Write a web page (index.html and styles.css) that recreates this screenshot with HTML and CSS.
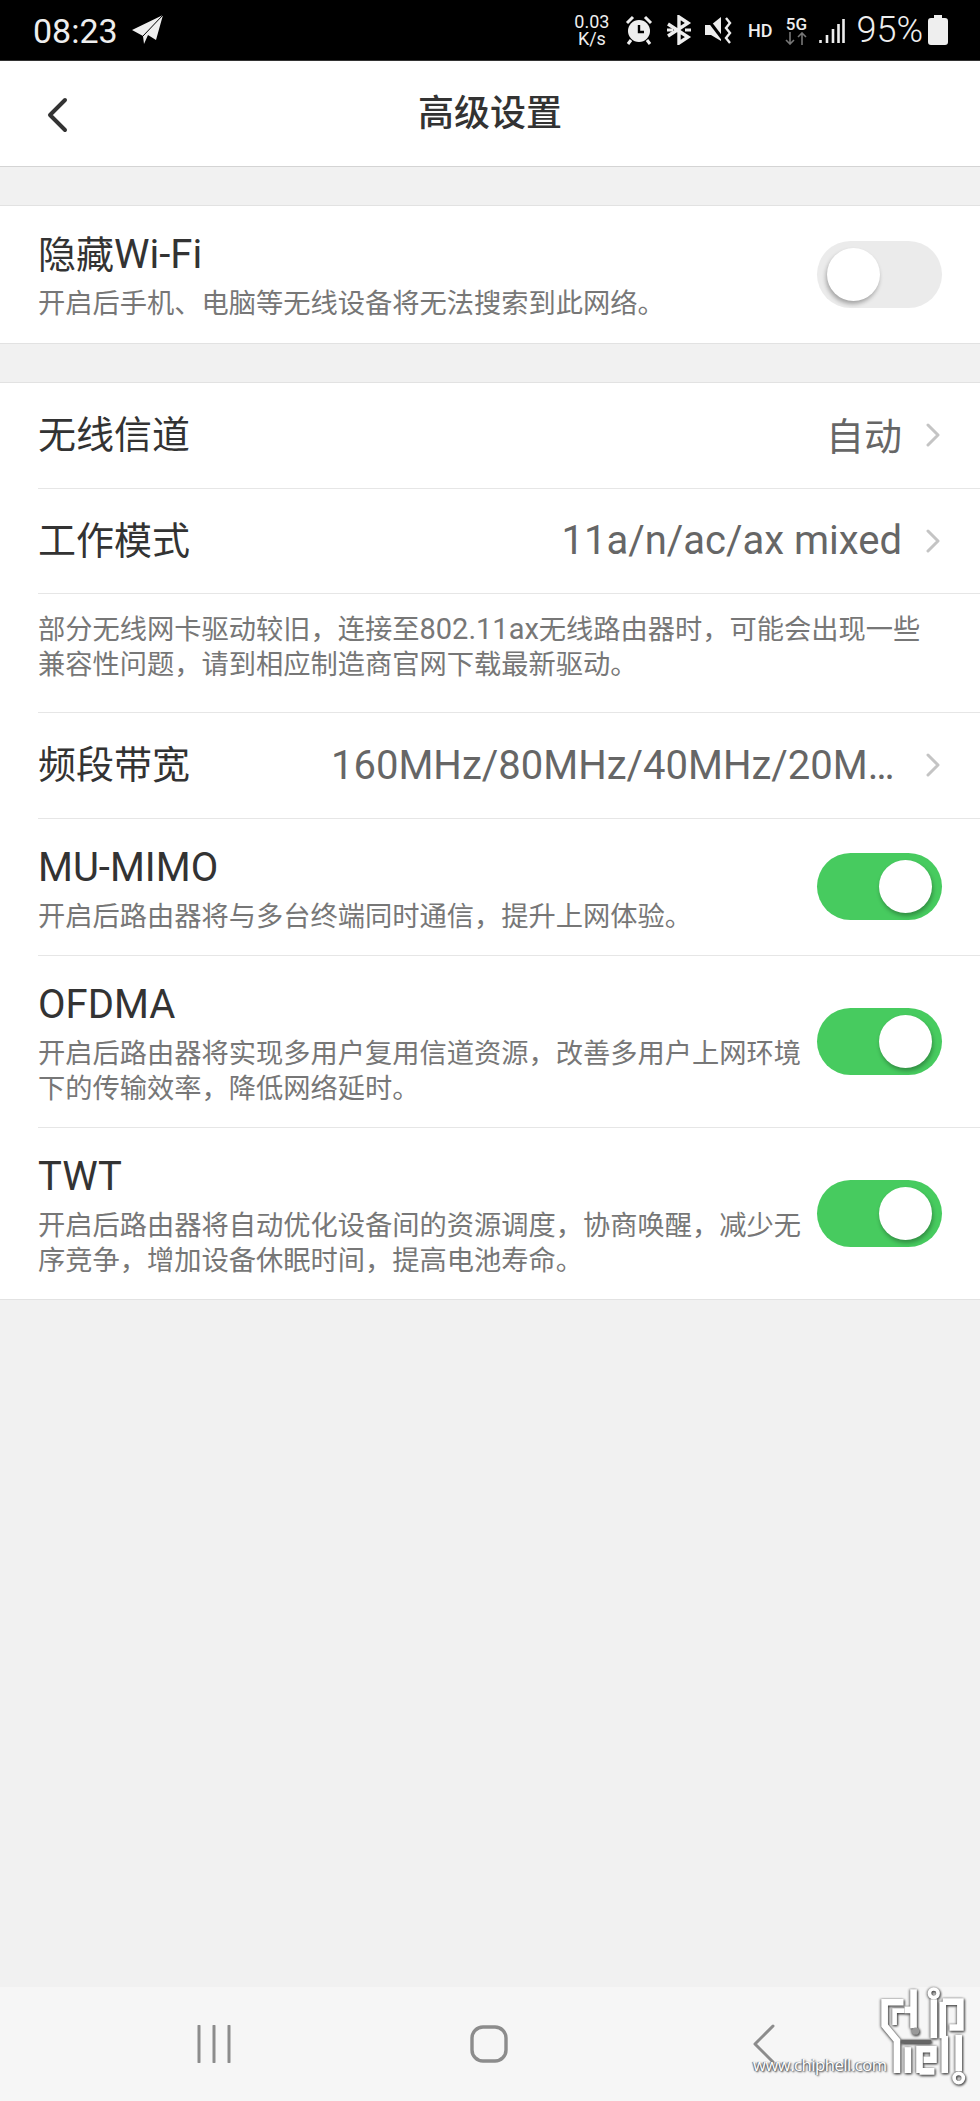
FILE: index.html
```html
<!DOCTYPE html>
<html lang="zh-CN">

<head>
    <meta charset="UTF-8">
    <meta name="viewport" content="width=device-width, initial-scale=1.0">
    <title>高级设置</title>
    <link rel="stylesheet" href="styles.css">
</head>

<body>
    <div class="screen">
        <div class="status-bar">
            <span class="clock">08:23</span>
            <svg class="icon-plane" width="32" height="32" viewBox="0 0 32 32">
                <path d="M0 16 L31 1 L24 26 L16 21 L12 30 L11 22 Z" fill="#eee" />
                <path d="M11 22 L31 1" stroke="#000" stroke-width="1" />
            </svg>
            <div class="status-right">
                <span class="net-speed">0.03<br>K/s</span>
                <svg class="icon-alarm" width="28" height="30" viewBox="0 0 28 30">
                    <circle cx="14" cy="16" r="11" fill="#eee" />
                    <path d="M14 10 V17 H19" fill="none" stroke="#000" stroke-width="2.4" />
                    <path d="M2 8 L8 2 M26 8 L20 2 M6 25 L3 29 M22 25 L25 29" stroke="#eee" stroke-width="3" />
                </svg>
                <svg class="icon-bt" width="26" height="30" viewBox="0 0 26 30">
                    <path d="M2 9 L22 22 L13 28 V2 L22 8 L2 21" fill="none" stroke="#eee" stroke-width="3.4" />
                    <path d="M19 15 H25 M1 15 H7" stroke="#eee" stroke-width="3" />
                </svg>
                <svg class="icon-mute" width="28" height="30" viewBox="0 0 28 30">
                    <path d="M1 10 H7 L17 2 V26 L7 20 H1 Z" fill="#eee" />
                    <path d="M2 2 L21 27" stroke="#000" stroke-width="3" />
                    <path d="M22 3 L26 8 L22 13 L26 18 L22 23 L26 28" fill="none" stroke="#eee" stroke-width="2.4" />
                </svg>
                <span class="hd">HD</span>
                <span class="net-type">5G<svg width="22" height="13" viewBox="0 0 22 13">
                        <path d="M5 0 V12 M1 8 L5 12 L9 8" fill="none" stroke="#777" stroke-width="1.6" />
                        <path d="M17 13 V1 M13 5 L17 1 L21 5" fill="none" stroke="#777" stroke-width="1.6" />
                    </svg></span>
                <svg class="icon-signal" width="26" height="26" viewBox="0 0 26 26">
                    <path d="M1.500 22 V25 M8 17 V25 M14 11 V25 M19.500 6 V25 M24.500 1 V25" stroke="#eee" stroke-width="2.600" />
                </svg>
                <span class="battery-text">95%</span>
                <svg class="icon-battery" width="20" height="30" viewBox="0 0 20 30">
                    <path d="M6 0 H14 V3 H17 Q20 3 20 6 V27 Q20 30 17 30 H3 Q0 30 0 27 V6 Q0 3 3 3 H6 Z" fill="#eee" />
                </svg>
            </div>
        </div>

        <div class="title-bar">
            <svg class="back" width="22" height="36" viewBox="0 0 22 36">
                <path d="M19 3 L4 18 L19 33" fill="none" stroke="#333" stroke-width="4" stroke-linecap="round" stroke-linejoin="round" />
            </svg>
            <h1>高级设置</h1>
        </div>

        <div class="section first">
            <div class="row row-text">
                <div class="row-info">
                    <div class="row-title">隐藏<span class="latin">Wi-Fi</span></div>
                    <div class="row-desc">开启后手机、电脑等无线设备将无法搜索到此网络。</div>
                </div>
                <div class="switch"><span class="knob"></span></div>
            </div>
        </div>

        <div class="section">
            <div class="row row-link">
                <div class="row-title">无线信道</div>
                <div class="row-value cjk">自动</div>
                <svg class="chevron" width="14" height="24" viewBox="0 0 14 24">
                    <path d="M2 2 L12 12 L2 22" fill="none" stroke="#c4c4c4" stroke-width="3" stroke-linecap="round" stroke-linejoin="round" />
                </svg>
            </div>
            <div class="row row-link">
                <div class="row-title">工作模式</div>
                <div class="row-value">11a/n/ac/ax mixed</div>
                <svg class="chevron" width="14" height="24" viewBox="0 0 14 24">
                    <path d="M2 2 L12 12 L2 22" fill="none" stroke="#c4c4c4" stroke-width="3" stroke-linecap="round" stroke-linejoin="round" />
                </svg>
            </div>
            <div class="row row-note">部分无线网卡驱动较旧，连接至<span class="latin">802.11ax</span>无线路由器时，可能会出现一些<br>兼容性问题，请到相应制造商官网下载最新驱动。</div>
            <div class="row row-link">
                <div class="row-title">频段带宽</div>
                <div class="row-value">160MHz/80MHz/40MHz/20MHz</div>
                <svg class="chevron" width="14" height="24" viewBox="0 0 14 24">
                    <path d="M2 2 L12 12 L2 22" fill="none" stroke="#c4c4c4" stroke-width="3" stroke-linecap="round" stroke-linejoin="round" />
                </svg>
            </div>
            <div class="row row-text">
                <div class="row-info">
                    <div class="row-title latin">MU-MIMO</div>
                    <div class="row-desc">开启后路由器将与多台终端同时通信，提升上网体验。</div>
                </div>
                <div class="switch on"><span class="knob"></span></div>
            </div>
            <div class="row row-text">
                <div class="row-info">
                    <div class="row-title latin">OFDMA</div>
                    <div class="row-desc">开启后路由器将实现多用户复用信道资源，改善多用户上网环境下的传输效率，降低网络延时。</div>
                </div>
                <div class="switch on"><span class="knob"></span></div>
            </div>
            <div class="row row-text last">
                <div class="row-info">
                    <div class="row-title latin">TWT</div>
                    <div class="row-desc">开启后路由器将自动优化设备间的资源调度，协商唤醒，减少无序竞争，增加设备休眠时间，提高电池寿命。</div>
                </div>
                <div class="switch on"><span class="knob"></span></div>
            </div>
        </div>

        <div class="nav-bar">
            <svg width="34" height="38" viewBox="0 0 34 38">
                <path d="M2 1 V37 M17 1 V37 M32 1 V37" stroke="#8c8c8c" stroke-width="3" stroke-linecap="round" />
            </svg>
            <svg width="38" height="38" viewBox="0 0 38 38">
                <rect x="2" y="2" width="34" height="34" rx="11" fill="none" stroke="#8c8c8c" stroke-width="3.400" />
            </svg>
            <svg width="24" height="40" viewBox="0 0 24 40">
                <path d="M21 2 L3 20 L21 38" fill="none" stroke="#8c8c8c" stroke-width="3" stroke-linecap="round" stroke-linejoin="round" />
            </svg>
        </div>

        <!-- watermark sits over the nav bar -->
        <div class="watermark">
            <span class="watermark-url">www.chiphell.com</span>
            <svg class="watermark-logo" width="93" height="103" viewBox="295 75 280 310">
                <g fill="none" stroke="#fff" stroke-width="20">
                    <path d="M372 127 H315 V197 L352 242 V340" />
                    <path d="M345 195 V152 H375" stroke-width="14" />
                    <path d="M402 88 V205 M375 150 H402" />
                    <path d="M463 118 V235" />
                    <circle cx="463" cy="100" r="13" stroke-width="11" />
                    <path d="M490 125 H543 V203 H510 M490 125 V235" />
                    <path d="M385 262 V340" />
                    <path d="M420 340 V268 H462 V300 H432 M420 335 H465" />
                    <path d="M496 228 V340" />
                    <path d="M538 225 V335" />
                    <circle cx="538" cy="355" r="14" stroke-width="11" />
                </g>
                <path d="M365 245 H455" fill="none" stroke="#666" stroke-width="10" />
                <circle cx="408" cy="214" r="11" fill="#999" />
            </svg>
        </div>
    </div>
</body>

</html>
```

FILE: styles.css
```css
body {
    margin: 0;
    font-family: Roboto, "Noto Sans CJK SC", sans-serif;
    background-color: #f1f1f1;
}

.screen {
    position: relative;
    width: 980px;
    height: 2101px;
    display: flex;
    flex-direction: column;
    overflow: hidden;
}

/* status bar */
.status-bar {
    height: 60px;
    background: #000;
    color: #eee;
    display: flex;
    align-items: center;
    padding: 0 32px 0 33px;
    flex-shrink: 0;
}

.clock {
    font-size: 34px;
    margin-top: 1px;
}

.icon-plane {
    margin-left: 14px;
}

.status-right {
    margin-left: auto;
    display: flex;
    align-items: center;
}

.net-speed {
    font-size: 18px;
    line-height: 17px;
    text-align: center;
    width: 38px;
    margin-right: 14px;
}

.icon-bt {
    margin-left: 13px;
}

.icon-mute {
    margin-left: 12px;
}

.hd {
    font-size: 18px;
    font-weight: 500;
    margin-left: 16px;
}

.net-type {
    font-size: 17px;
    font-weight: 500;
    line-height: 16px;
    margin-left: 13px;
    display: flex;
    flex-direction: column;
    align-items: center;
}

.icon-signal {
    margin-left: 12px;
    margin-top: 2px;
}

.battery-text {
    font-size: 36px;
    font-weight: 300;
    margin-left: 11px;
}

.icon-battery {
    margin-left: 5px;
}

/* title bar */
.title-bar {
    height: 105px;
    background: #fff;
    border-top: 1px solid #333;
    border-bottom: 1px solid #d4d4d4;
    display: flex;
    align-items: center;
    justify-content: center;
    position: relative;
    flex-shrink: 0;
}

.back {
    position: absolute;
    left: 46px;
    top: 36px;
}

h1 {
    margin: -8px 0 0;
    font-size: 36px;
    font-weight: 500;
    color: #333;
}

/* settings lists */
.section {
    background: #fff;
    border-top: 1px solid #e2e2e2;
    border-bottom: 1px solid #e2e2e2;
    padding-left: 38px;
    margin-top: 38px;
}

.row {
    display: flex;
    align-items: center;
    padding-right: 38px;
    border-bottom: 1px solid #e6e6e6;
    box-sizing: border-box;
}

.row.last,
.section.first .row {
    border-bottom: none;
}

.row-link {
    height: 105.500px;
}

.row-title {
    font-size: 38px;
    line-height: 50px;
    color: #333;
    white-space: nowrap;
}

.row-title.latin,
.row-title .latin {
    font-size: 40px;
}

.row-value {
    margin-left: auto;
    max-width: 571px;
    font-size: 40px;
    color: #666;
    white-space: nowrap;
    overflow: hidden;
    text-overflow: ellipsis;
}

.row-value.cjk {
    font-size: 38px;
    margin-top: -4px;
}

.chevron {
    margin-left: 24px;
    margin-right: 2px;
    flex-shrink: 0;
}

.row-note {
    display: block;
    padding-top: 18px;
    padding-bottom: 29px;
    font-size: 27.250px;
    line-height: 35px;
    color: #777;
}

.row-note .latin {
    font-size: 29px;
}

.row-text {
    padding-top: 24px;
    padding-bottom: 20px;
}

.section.first .row-text {
    padding-bottom: 21px;
}

.row-info {
    flex: 1;
    min-width: 0;
}

.row-desc {
    margin-top: 7px;
    width: 770px;
    font-size: 27.250px;
    line-height: 35px;
    color: #777;
}

/* toggle */
.switch {
    position: relative;
    width: 125px;
    height: 67px;
    border-radius: 34px;
    background: #ebebeb;
    margin-left: auto;
    margin-top: -4px;
    flex-shrink: 0;
}

.switch.on {
    background: #47cb5f;
}

.knob {
    position: absolute;
    left: 10px;
    top: 7px;
    width: 53px;
    height: 53px;
    border-radius: 50%;
    background: #fff;
    box-shadow: -1px 3px 4px rgba(0, 0, 0, 0.3);
}

.switch.on .knob {
    left: 62px;
    box-shadow: 1px 3px 4px rgba(0, 0, 0, 0.3);
}

/* bottom nav */
.nav-bar {
    margin-top: auto;
    height: 114px;
    background: #f6f6f6;
    display: flex;
    align-items: center;
    flex-shrink: 0;
    padding-left: 197px;
    gap: 239px;
}

.nav-bar svg:nth-child(3) {
    margin-left: 5px;
}

/* watermark */
.watermark-url {
    position: absolute;
    left: 753px;
    top: 2053px;
    font-family: "Open Sans", sans-serif;
    font-size: 16.500px;
    letter-spacing: -0.400px;
    color: #fff;
    text-shadow: 1px 1px 2px #333, -1px 0 1px #666;
    white-space: nowrap;
}

.watermark-logo {
    position: absolute;
    left: 878px;
    top: 1985px;
    filter: drop-shadow(1px 1px 1px #444) drop-shadow(-1px 0 1px #888);
}
```
